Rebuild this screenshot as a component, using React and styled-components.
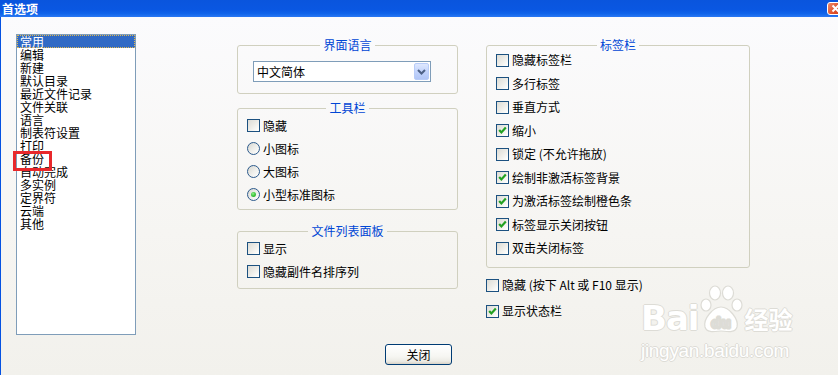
import React from 'react';
import styled, { createGlobalStyle } from 'styled-components';

const Global = createGlobalStyle`
  html, body { margin: 0; padding: 0; }
  body {
    width: 838px; height: 375px; overflow: hidden;
    font-family: "Noto Sans CJK SC", "Noto Sans", sans-serif;
    font-size: 12px; color: #000;
  }
  #root { width: 838px; height: 375px; }
`;

const Window = styled.div`
  width: 838px; height: 375px; display: flex; flex-direction: column;
  overflow: hidden; position: relative;
`;

const TitleBar = styled.div`
  height: 17px; flex: none; display: flex; align-items: flex-start;
  justify-content: space-between; padding-left: 2px;
  background: linear-gradient(to bottom, #0a55dd 0%, #0a57e2 55%, #1064ea 80%, #2a78f3 100%);
`;

const TitleText = styled.div`
  color: #fff; font-weight: bold; font-size: 12px; line-height: 12px; margin-top: 3px;
`;

const CloseBtn = styled.div`
  width: 21px; height: 13px; margin-top: 2px; margin-right: -10px; box-sizing: border-box;
  border: 1px solid #fff; border-radius: 3px;
  background: linear-gradient(135deg, #ee8a6a 0%, #de4f2a 50%, #c8391a 100%);
  display: flex; align-items: center; padding-left: 3px;
`;

const Body = styled.div`
  flex: 1; display: flex; flex-direction: column;
  border-left: 1px solid #0552e2;
  background: linear-gradient(to bottom, #fbfbfd 0%, #f6f5f2 60%, #f2f1ec 100%);
  padding-top: 17px;
`;

const Main = styled.div`
  display: flex; align-items: flex-start; padding-left: 15px;
`;

const ListWrap = styled.div`
  position: relative; flex: none;
`;

const ListBox = styled.div`
  width: 120px; height: 301px; box-sizing: border-box;
  border: 1px solid #7f9db9; background: #fff; padding: 0;
`;

const ListItem = styled.div`
  height: 13px; line-height: 13px; padding-left: 3px; white-space: nowrap;
  background: ${p => (p.$sel ? '#316ac5' : 'transparent')};
  color: ${p => (p.$sel ? '#fff' : '#000')};
  outline: ${p => (p.$sel ? '1px dotted #e0b850' : 'none')};
  outline-offset: -1px;
`;

const Mark = styled.div`
  position: absolute; left: -3px; top: 117px; width: 39px; height: 20px;
  box-sizing: border-box; border: 3px solid #e8282b;
`;

const Column = styled.div`
  display: flex; flex-direction: column; flex: none;
  width: ${p => p.$w}px; margin-left: ${p => p.$ml}px; margin-top: 5px;
`;

const Group = styled.fieldset`
  margin: ${p => p.$mt || 0}px 0 0 0; padding: ${p => p.$pad};
  border: 1px solid #d0d0bf; border-radius: 3px; min-width: 0;
  display: flex; flex-direction: column;
`;

const Legend = styled.legend`
  margin: 0 auto; padding: 0 3px; color: #0046d5; font-size: 12px; line-height: 12px;
`;

const Row = styled.div`
  display: flex; align-items: center; gap: 3px; white-space: nowrap;
  height: ${p => p.$h}px; box-sizing: border-box; line-height: 12px;
  padding-bottom: ${p => p.$shift || 0}px;
`;

const Box = styled.span`
  width: 13px; height: 13px; box-sizing: border-box; flex: none;
  border: 1px solid #1c5180;
  background: linear-gradient(135deg, #dcdcd6 0%, #ecebe6 45%, #fbfbf9 85%, #fff 100%);
  display: inline-flex; align-items: center; justify-content: center;
`;

const RadioCircle = styled.span`
  width: 13px; height: 13px; box-sizing: border-box; flex: none; border-radius: 50%;
  border: 1px solid #2c5a8c;
  background: linear-gradient(135deg, #d6d6d0 0%, #eeeeea 50%, #fff 100%);
  display: inline-flex; align-items: center; justify-content: center;
`;

const Dot = styled.span`
  width: 5px; height: 5px; border-radius: 50%;
  background: radial-gradient(circle at 40% 35%, #8ef088 0%, #3cc43a 50%, #1c9a1c 100%);
`;

const Combo = styled.div`
  width: 178px; height: 21px; box-sizing: border-box; border: 1px solid #7f9db9;
  background: #fff; display: flex; align-items: center; justify-content: space-between;
  padding: 0 1px 0 3px;
`;

const ComboBtn = styled.span`
  width: 15px; height: 17px; box-sizing: border-box; border: 1px solid #b8ccf8; border-radius: 2px;
  background: linear-gradient(to bottom, #dfe8fe 0%, #c3d4fc 50%, #b1c6f7 100%);
  display: flex; align-items: center; justify-content: center;
`;

const Footer = styled.div`
  display: flex; justify-content: center; margin-top: 9px; padding-right: 2px;
`;

const Button = styled.div`
  width: 67px; height: 21px; box-sizing: border-box; border: 1px solid #003c74; border-radius: 3px;
  background: linear-gradient(to bottom, #ffffff 0%, #f6f6f2 60%, #ecebe5 85%, #d8d2c6 100%);
  display: flex; align-items: center; justify-content: center; line-height: 12px;
`;

const Watermark = styled.div`
  position: absolute; left: 641px; top: 285px; width: 160px; pointer-events: none;
  color: #ffffff;
  text-shadow: 1px 0 0 #dddcd6, -1px 0 0 #dddcd6, 0 1px 0 #dddcd6, 0 -1px 0 #dddcd6;
`;

const WmTop = styled.div`
  display: flex; align-items: flex-end; height: 50px;
`;

const WmBai = styled.span`
  font-family: "DejaVu Sans", sans-serif; font-weight: bold; font-size: 34px; line-height: 34px;
  letter-spacing: -1px;
`;

const WmJing = styled.span`
  font-family: "Noto Sans CJK SC", sans-serif; font-weight: bold; font-size: 24px; line-height: 30px;
  margin-left: 2px; margin-bottom: 1px;
`;

const WmUrl = styled.div`
  font-family: "Liberation Sans", sans-serif; font-size: 19px; line-height: 20px; margin-top: 6px;
  letter-spacing: -0.3px;
`;

const Check = () => (
  <svg width="9" height="9" viewBox="0 0 9 9">
    <polyline points="1.2,4 3.4,6.4 7.8,1.6" fill="none" stroke="#21a121" strokeWidth="2.2" />
  </svg>
);

const CheckItem = ({ checked, label, h, shift }) => (
  <Row $h={h} $shift={shift}>
    <Box>{checked && <Check />}</Box>
    <span>{label}</span>
  </Row>
);

const RadioItem = ({ checked, label, h }) => (
  <Row $h={h}>
    <RadioCircle>{checked && <Dot />}</RadioCircle>
    <span>{label}</span>
  </Row>
);

const Paw = () => (
  <svg width="44" height="50" viewBox="0 0 44 50">
    <g fill="#fff" stroke="#dddcd6" strokeWidth="1.2">
      <ellipse cx="7" cy="20" rx="5" ry="6" />
      <ellipse cx="16" cy="8" rx="5.5" ry="7" />
      <ellipse cx="29" cy="8" rx="5.5" ry="7" />
      <ellipse cx="38" cy="20" rx="5" ry="6" />
      <path d="M22 22 C 30 22, 40 34, 38 42 C 36 49, 26 46, 22 46 C 18 46, 8 49, 6 42 C 4 34, 14 22, 22 22 Z" />
    </g>
    <text x="22" y="43" textAnchor="middle" fontFamily="DejaVu Sans, sans-serif" fontWeight="bold"
      fontSize="14" fill="#fff" stroke="#dddcd6" strokeWidth="0.8">du</text>
  </svg>
);

const items = ['常用', '编辑', '新建', '默认目录', '最近文件记录', '文件关联', '语言', '制表符设置', '打印', '备份', '自动完成', '多实例', '定界符', '云端', '其他'];

const tabOptions = [
  ['隐藏标签栏', false],
  ['多行标签', false],
  ['垂直方式', false],
  ['缩小', true],
  ['锁定 (不允许拖放)', false],
  ['绘制非激活标签背景', true],
  ['为激活标签绘制橙色条', true],
  ['标签显示关闭按钮', true],
  ['双击关闭标签', false],
];

export default function App() {
  return (
    <>
      <Global />
      <Window>
        <TitleBar>
          <TitleText>首选项</TitleText>
          <CloseBtn>
            <svg width="9" height="9" viewBox="0 0 9 9">
              <path d="M1.5 1.5 L7.5 7.5 M7.5 1.5 L1.5 7.5" stroke="#fff" strokeWidth="2" />
            </svg>
          </CloseBtn>
        </TitleBar>
        <Body>
          <Main>
            <ListWrap>
              <ListBox>
                {items.map((t, i) => (
                  <ListItem key={t} $sel={i === 0}>{t}</ListItem>
                ))}
              </ListBox>
              <Mark />
            </ListWrap>

            <Column $w={221} $ml={101}>
              <Group $pad="10px 15px 11px 15px">
                <Legend>界面语言</Legend>
                <Combo>
                  <span>中文简体</span>
                  <ComboBtn>
                    <svg width="9" height="6" viewBox="0 0 9 6">
                      <polyline points="1,1 4.5,4.5 8,1" fill="none" stroke="#4d6185" strokeWidth="2" />
                    </svg>
                  </ComboBtn>
                </Combo>
              </Group>
              <Group $mt={8} $pad="0 9px 3px 9px">
                <Legend>工具栏</Legend>
                <CheckItem h={23} label="隐藏" />
                <RadioItem h={23} label="小图标" />
                <RadioItem h={23} label="大图标" />
                <RadioItem h={23} label="小型标准图标" checked />
              </Group>
              <Group $mt={15} $pad="0 9px 5px 9px">
                <Legend>文件列表面板</Legend>
                <CheckItem h={23} label="显示" />
                <CheckItem h={23} label="隐藏副件名排序列" />
              </Group>
            </Column>

            <Column $w={264} $ml={28}>
              <Group $pad="0 9px 4.5px 9px">
                <Legend>标签栏</Legend>
                {tabOptions.map(([t, c]) => (
                  <CheckItem key={t} h={23.5} shift={5} label={t} checked={c} />
                ))}
              </Group>
              <Row $h={4} />
              <CheckItem h={26} label="隐藏 (按下 Alt 或 F10 显示)" />
              <CheckItem h={26} label="显示状态栏" checked />
            </Column>
          </Main>
          <Footer>
            <Button>关闭</Button>
          </Footer>
        </Body>
        <Watermark>
          <WmTop>
            <WmBai>Bai</WmBai>
            <Paw />
            <WmJing>经验</WmJing>
          </WmTop>
          <WmUrl>jingyan.baidu.com</WmUrl>
        </Watermark>
      </Window>
    </>
  );
}
